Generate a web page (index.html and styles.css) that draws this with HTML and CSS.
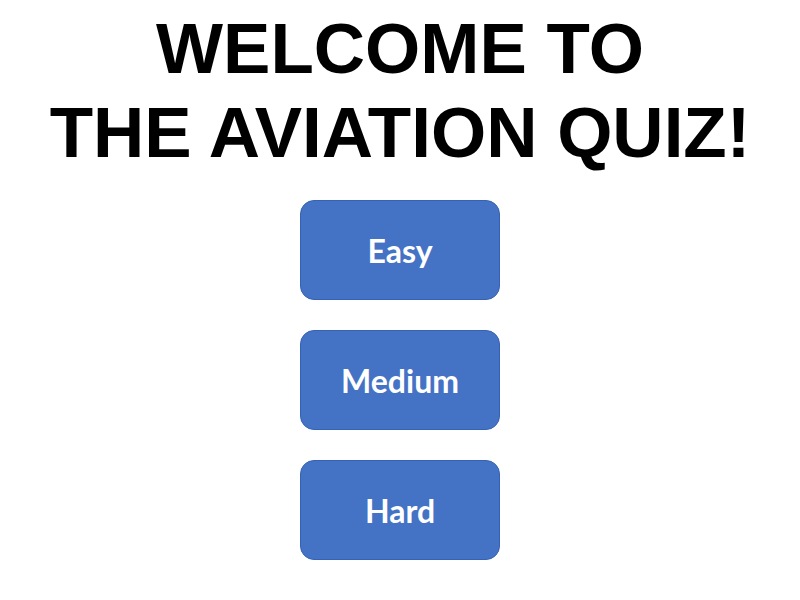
FILE: index.html
```html
<!DOCTYPE html>
<html>
<head>
<meta charset="utf-8">
<link rel="stylesheet" href="styles.css">
</head>
<body>
<main class="page">
  <h1 class="title">WELCOME TO<br>THE AVIATION QUIZ!</h1>
  <div class="levels">
    <button class="level">Easy</button>
    <button class="level">Medium</button>
    <button class="level">Hard</button>
  </div>
</main>
</body>
</html>
```
FILE: styles.css
```css
html, body {
  margin: 0;
  padding: 0;
  background: #ffffff;
}
.page {
  width: 800px;
  height: 600px;
  display: flex;
  flex-direction: column;
  align-items: center;
}
.title {
  margin: 7px 0 0 0;
  font-family: "Liberation Sans", Arial, sans-serif;
  font-weight: bold;
  font-size: 71px;
  line-height: 84px;
  text-align: center;
  color: #000000;
}
.levels {
  margin-top: 25px;
  display: flex;
  flex-direction: column;
  gap: 30px;
}
.level {
  width: 200px;
  height: 100px;
  box-sizing: border-box;
  background: #4472c4;
  border: 1px solid #3562b3;
  border-radius: 14px;
  color: #ffffff;
  font-family: Lato, "Open Sans", sans-serif;
  font-weight: bold;
  font-size: 32px;
  padding: 0;
}
```
